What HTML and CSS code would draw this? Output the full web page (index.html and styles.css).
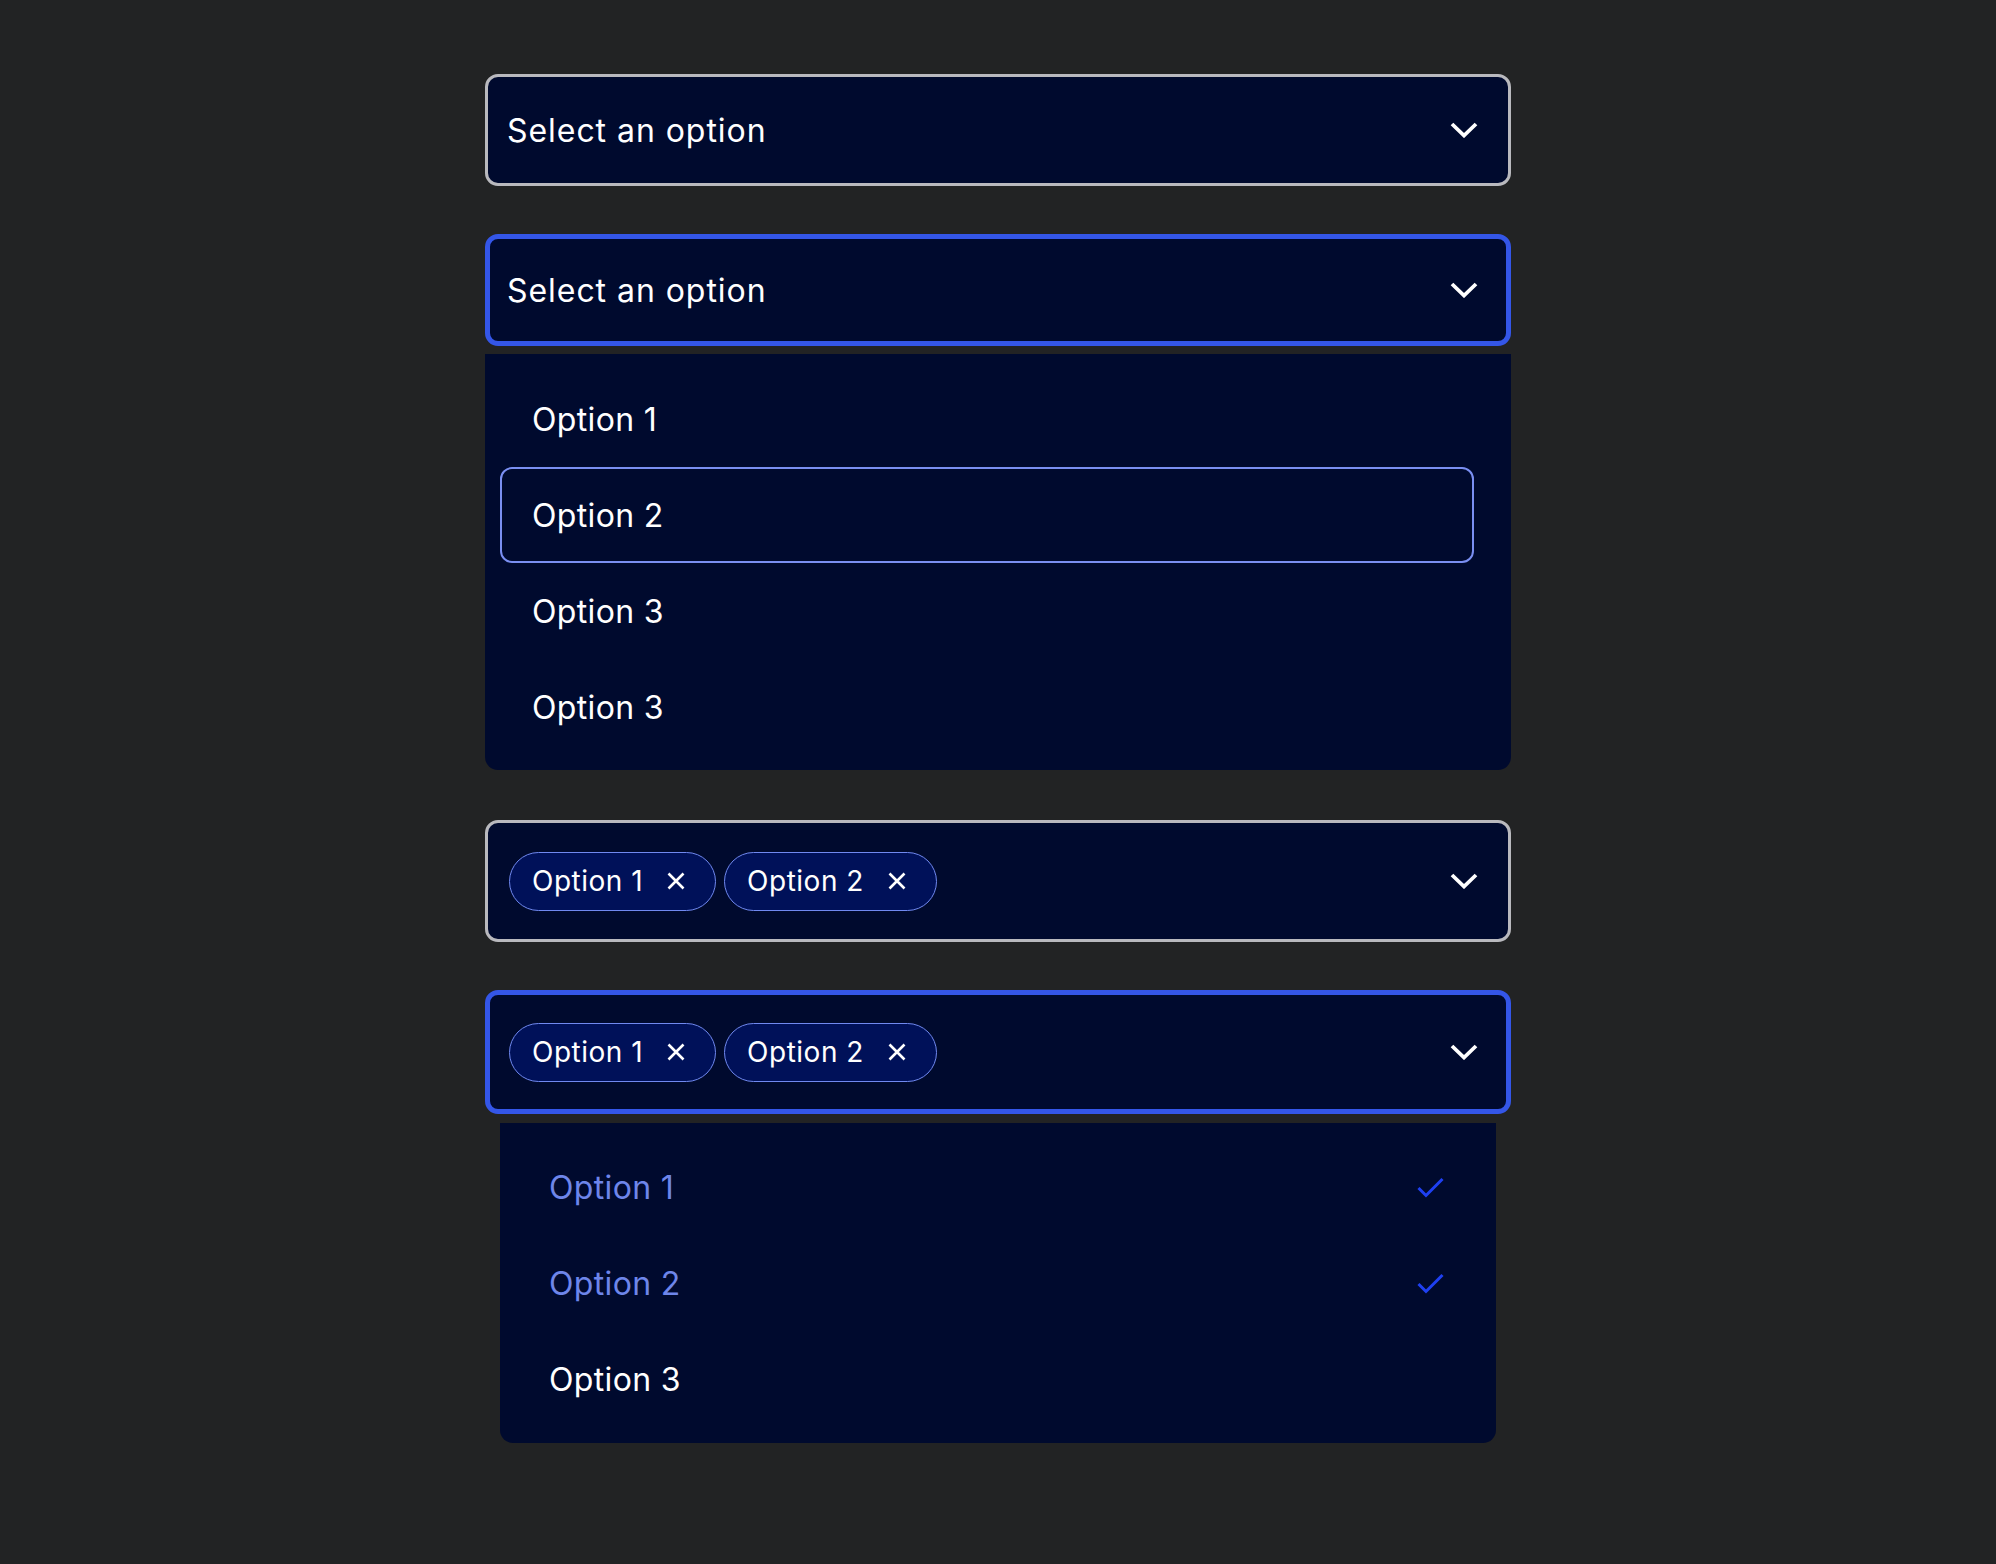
FILE: index.html
```html
<!DOCTYPE html>
<html lang="en">
<head>
<meta charset="utf-8">
<title>Select</title>
<link rel="stylesheet" href="styles.css">
</head>
<body>
<main class="stack">
  <div class="field">
    <span class="placeholder">Select an option</span>
    <svg class="chevron" viewBox="0 0 28 16" width="28" height="16"><path d="M2 2 L14 13.5 L26 2"/></svg>
  </div>

  <div class="field focus gap-lg">
    <span class="placeholder">Select an option</span>
    <svg class="chevron" viewBox="0 0 28 16" width="28" height="16"><path d="M2 2 L14 13.5 L26 2"/></svg>
  </div>
  <ul class="menu">
    <li class="option">Option 1</li>
    <li class="option active">Option 2</li>
    <li class="option">Option 3</li>
    <li class="option">Option 3</li>
  </ul>

  <div class="field multi gap-xl">
    <div class="tags">
      <span class="tag">Option 1<svg class="x" viewBox="0 0 18 18" width="18" height="18"><path d="M1.5 1.5 L16.5 16.5 M16.5 1.5 L1.5 16.5"/></svg></span>
      <span class="tag">Option 2<svg class="x" viewBox="0 0 18 18" width="18" height="18"><path d="M1.5 1.5 L16.5 16.5 M16.5 1.5 L1.5 16.5"/></svg></span>
    </div>
    <svg class="chevron" viewBox="0 0 28 16" width="28" height="16"><path d="M2 2 L14 13.5 L26 2"/></svg>
  </div>

  <div class="field multi tall focus">
    <div class="tags">
      <span class="tag">Option 1<svg class="x" viewBox="0 0 18 18" width="18" height="18"><path d="M1.5 1.5 L16.5 16.5 M16.5 1.5 L1.5 16.5"/></svg></span>
      <span class="tag">Option 2<svg class="x" viewBox="0 0 18 18" width="18" height="18"><path d="M1.5 1.5 L16.5 16.5 M16.5 1.5 L1.5 16.5"/></svg></span>
    </div>
    <svg class="chevron" viewBox="0 0 28 16" width="28" height="16"><path d="M2 2 L14 13.5 L26 2"/></svg>
  </div>
  <ul class="menu checklist">
    <li class="option selected">Option 1<svg class="check" viewBox="0 0 27 21" width="27" height="21"><path d="M1.5 11 L9 18.5 L25.5 2"/></svg></li>
    <li class="option selected">Option 2<svg class="check" viewBox="0 0 27 21" width="27" height="21"><path d="M1.5 11 L9 18.5 L25.5 2"/></svg></li>
    <li class="option">Option 3</li>
  </ul>
</main>
</body>
</html>
```

FILE: styles.css
```css
* { box-sizing: border-box; }

html, body {
  margin: 0;
  padding: 0;
  background: #222324;
  height: 100%;
}

body {
  font-family: "Inter", "Noto Sans", sans-serif;
  color: #ffffff;
}

.stack {
  width: 1026px;
  margin: 0 auto;
  padding-top: 74px;
  display: flex;
  flex-direction: column;
}

.field {
  height: 112px;
  background: #000a2e;
  border: 3px solid #b9b9be;
  border-radius: 13px;
  display: flex;
  align-items: center;
  justify-content: space-between;
  padding: 0 30px 0 19px;
}

.field.focus {
  border: 5px solid #3456e8;
  padding: 0 28px 0 17px;
}

.field.multi {
  height: 122px;
  padding-left: 21px;
}

.field.multi.focus {
  padding-left: 19px;
}

.field.multi.tall {
  height: 124px;
  margin-top: 48px;
}

.gap-lg { margin-top: 48px; }
.gap-xl { margin-top: 50px; }

.placeholder {
  font-size: 32px;
  font-weight: 400;
  letter-spacing: 0.95px;
}

.chevron {
  fill: none;
  stroke: #ffffff;
  stroke-width: 3.8;
  stroke-linecap: butt;
  stroke-linejoin: miter;
}

.menu {
  list-style: none;
  margin: 8px 0 0;
  padding: 17px 37px 15px 15px;
  background: #000a2e;
  border-radius: 0 0 13px 13px;
}

.option {
  height: 96px;
  display: flex;
  align-items: center;
  padding-left: 30px;
  font-size: 32px;
  letter-spacing: 0.35px;
  border: 2px solid transparent;
  border-radius: 12px;
}

.option.active {
  border-color: #7a8ff2;
}

.menu.checklist {
  margin: 9px 15px 0;
  padding: 16px 0;
  border-radius: 0 0 13px 13px;
}

.checklist .option {
  padding-left: 49px;
  padding-right: 52px;
  justify-content: space-between;
  border: 0;
}

.option.selected {
  color: #6e86ea;
}

.check {
  fill: none;
  stroke: #1e40f2;
  stroke-width: 3;
}

.tags {
  display: flex;
  gap: 8px;
}

.tag {
  height: 59px;
  display: inline-flex;
  align-items: center;
  gap: 24px;
  padding: 0 30px 0 22px;
  background: #001159;
  border: 1.5px solid #7089f0;
  border-radius: 30px;
  font-size: 28px;
  letter-spacing: 0.5px;
}

.x {
  fill: none;
  stroke: #ffffff;
  stroke-width: 2.6;
}
```
